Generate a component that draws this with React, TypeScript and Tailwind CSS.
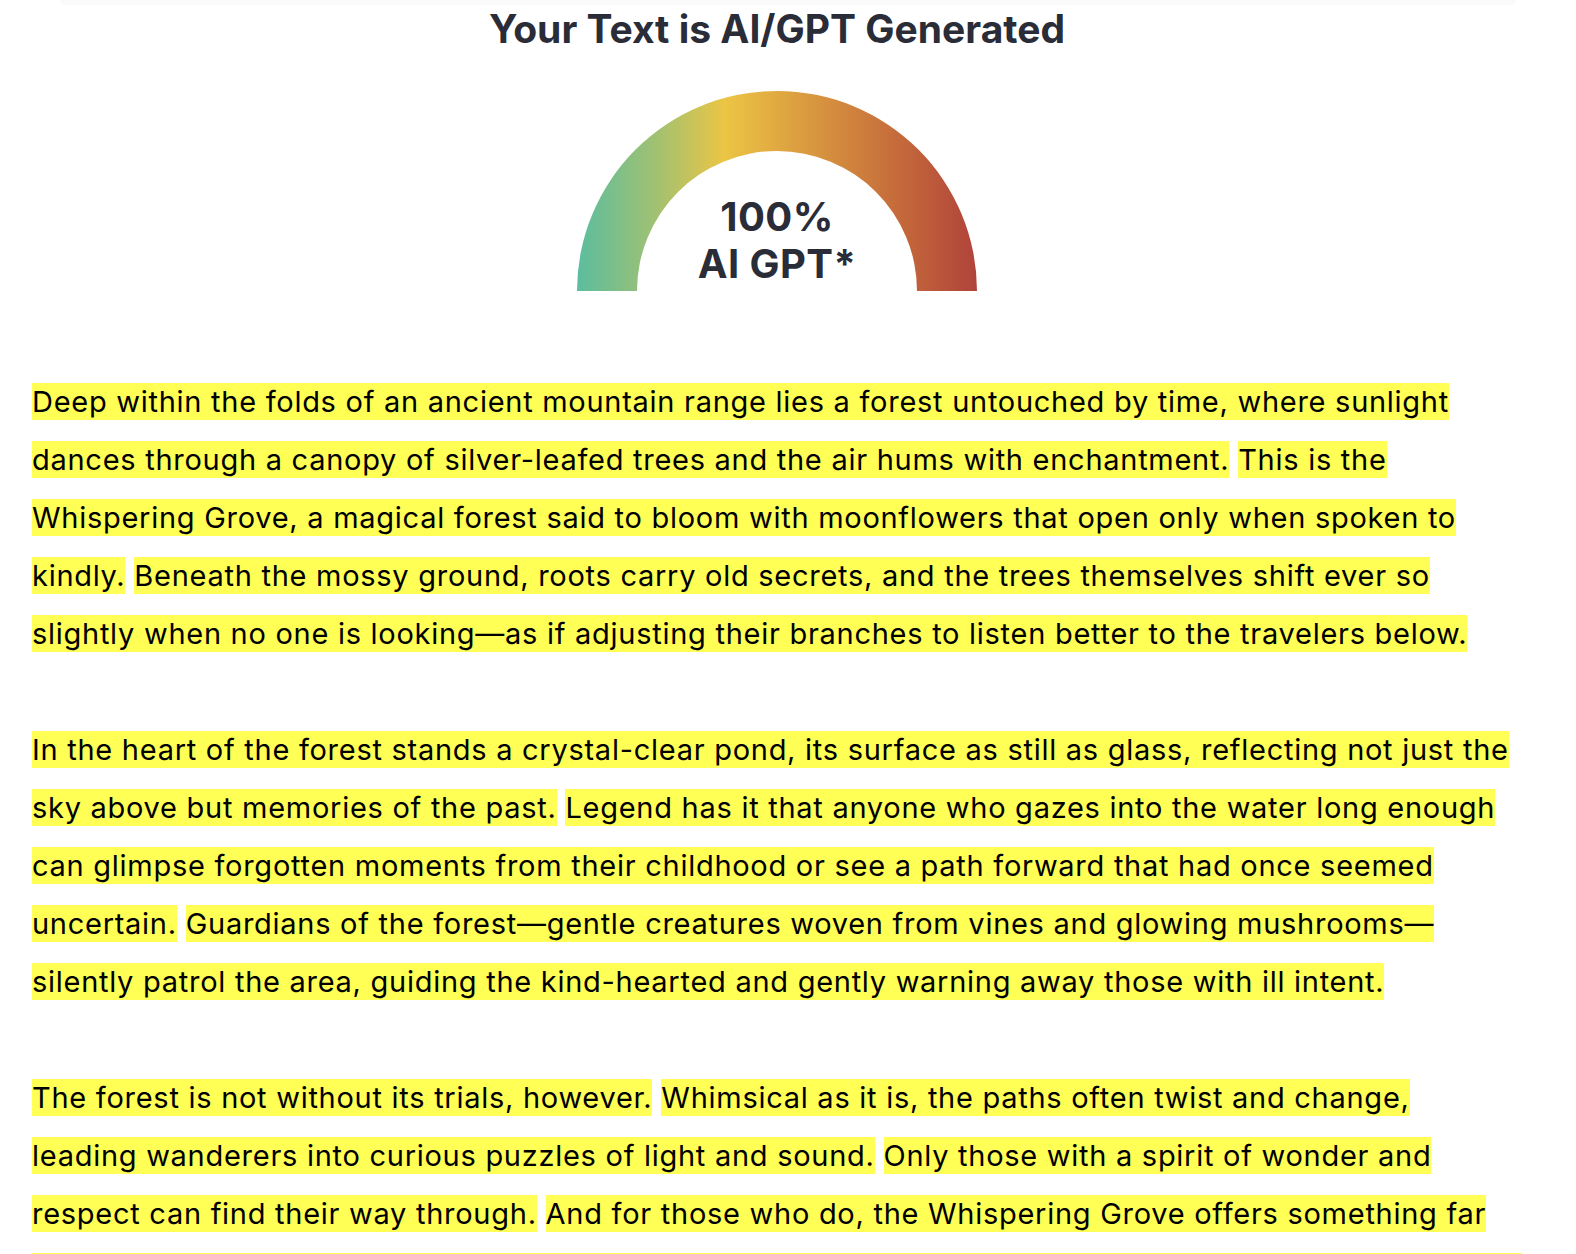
import React from 'react';

const paragraphs: string[][] = [
  [
    'Deep within the folds of an ancient mountain range lies a forest untouched by time, where sunlight dances through a canopy of silver-leafed trees and the air hums with enchantment.',
    'This is the Whispering Grove, a magical forest said to bloom with moonflowers that open only when spoken to kindly.',
    'Beneath the mossy ground, roots carry old secrets, and the trees themselves shift ever so slightly when no one is looking—as if adjusting their branches to listen better to the travelers below.',
  ],
  [
    'In the heart of the forest stands a crystal-clear pond, its surface as still as glass, reflecting not just the sky above but memories of the past.',
    'Legend has it that anyone who gazes into the water long enough can glimpse forgotten moments from their childhood or see a path forward that had once seemed uncertain.',
    'Guardians of the forest—gentle creatures woven from vines and glowing mushrooms—silently patrol the area, guiding the kind-hearted and gently warning away those with ill intent.',
  ],
  [
    'The forest is not without its trials, however.',
    'Whimsical as it is, the paths often twist and change, leading wanderers into curious puzzles of light and sound.',
    'Only those with a spirit of wonder and respect can find their way through.',
    'And for those who do, the Whispering Grove offers something far more precious than gold: a quiet reminder that wonder still lives in the world for anyone willing to listen.',
  ],
];

const Gauge: React.FC<{ score: number }> = ({ score }) => (
  <div className="relative w-[400px] h-[200px]">
    <svg width="400" height="200" viewBox="0 0 400 200">
      <defs>
        <linearGradient id="gaugeFill" x1="0" y1="0" x2="1" y2="0">
          <stop offset="0%" stopColor="#5bbd9f" />
          <stop offset="20%" stopColor="#a2c171" />
          <stop offset="37%" stopColor="#ecc544" />
          <stop offset="55%" stopColor="#dc9f40" />
          <stop offset="78%" stopColor="#c76f3b" />
          <stop offset="100%" stopColor="#b0433a" />
        </linearGradient>
      </defs>
      <path d="M0 200 A200 200 0 0 1 400 200 L340 200 A140 140 0 0 0 60 200 Z" fill="url(#gaugeFill)" />
    </svg>
    <div className="absolute left-0 right-0 top-[102px] text-center text-[40px] leading-[47px] font-bold tracking-[0.01em] text-[#2a2c37]">
      <div>{score}%</div>
      <div>AI GPT*</div>
    </div>
  </div>
);

export default function App() {
  return (
    <div
      className="h-[1254px] overflow-hidden bg-white"
      style={{ fontFamily: 'Inter, "Noto Sans", sans-serif' }}
    >
      <div className="mx-[60px] h-[5px] rounded-b-md bg-[#fafafa]" />
      <div className="pl-8 pr-[54px]">
        <h1 className="text-center text-[39px] leading-[48px] font-bold text-[#2a2c37]">
          Your Text is AI/GPT Generated
        </h1>
        <div className="flex justify-center mt-[38px]">
          <Gauge score={100} />
        </div>
        <div className="mt-[82px] flex flex-col gap-[58px] text-[29px] leading-[58px] tracking-[0.025em] text-black">
          {paragraphs.map((sentences, i) => (
            <p key={i}>
              {sentences.map((s, j) => (
                <React.Fragment key={j}>
                  <span className="bg-[#ffff55] py-px">{s}</span>
                  {j < sentences.length - 1 ? ' ' : ''}
                </React.Fragment>
              ))}
            </p>
          ))}
        </div>
      </div>
    </div>
  );
}
